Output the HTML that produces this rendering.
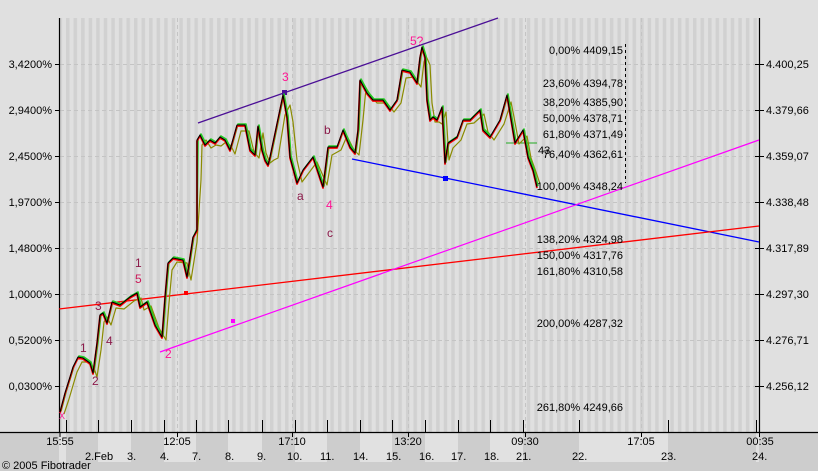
<!DOCTYPE html>
<html><head><meta charset="utf-8"><style>
html,body{margin:0;padding:0;background:#e0e0e0;}
svg{display:block;font-family:"Liberation Sans",Arial,sans-serif;}
</style></head><body>
<svg width="818" height="471" viewBox="0 0 818 471" xmlns="http://www.w3.org/2000/svg">
<defs>
<pattern id="st" x="66" y="0" width="7.554" height="10" patternUnits="userSpaceOnUse">
<rect x="0" y="0" width="3.5" height="10" fill="#d1d1d1"/>
</pattern>
</defs>
<rect width="818" height="471" fill="#e0e0e0"/>
<rect x="60" y="18" width="699" height="414" fill="url(#st)"/>
<!-- bottom axis band -->
<rect x="0" y="432" width="818" height="39" fill="#cdcdcd"/>
<g fill="#e1e1e1">
<rect x="59" y="432" width="7" height="30"/>
<rect x="98" y="432" width="33" height="30"/>
<rect x="164" y="432" width="32" height="30"/>
<rect x="228" y="432" width="34" height="30"/>
<rect x="295" y="432" width="32" height="30"/>
<rect x="360" y="432" width="32" height="30"/>
<rect x="425" y="432" width="33" height="30"/>
<rect x="490" y="432" width="33" height="30"/>
<rect x="579" y="432" width="89" height="30"/>
<rect x="756" y="432" width="3" height="30"/>
</g>
<!-- grid -->
<g stroke="#c4c4c4" stroke-dasharray="4,3" stroke-width="1">
<line x1="60" y1="64.5" x2="759" y2="64.5"/>
<line x1="60" y1="110.5" x2="759" y2="110.5"/>
<line x1="60" y1="156.5" x2="759" y2="156.5"/>
<line x1="60" y1="202.5" x2="759" y2="202.5"/>
<line x1="60" y1="248.5" x2="759" y2="248.5"/>
<line x1="60" y1="294.5" x2="759" y2="294.5"/>
<line x1="60" y1="340.5" x2="759" y2="340.5"/>
<line x1="60" y1="386.5" x2="759" y2="386.5"/>
<line x1="177.5" y1="18" x2="177.5" y2="432"/>
<line x1="292.5" y1="18" x2="292.5" y2="432"/>
<line x1="408.5" y1="18" x2="408.5" y2="432"/>
<line x1="525.5" y1="18" x2="525.5" y2="432"/>
<line x1="641.5" y1="18" x2="641.5" y2="432"/>
</g>
<!-- axes -->
<g stroke="#000" stroke-width="1.2">
<line x1="59.5" y1="18" x2="59.5" y2="433"/>
<line x1="759.5" y1="18" x2="759.5" y2="433"/>
<line x1="0" y1="432.5" x2="818" y2="432.5"/>
</g>
<g stroke="#000" stroke-width="1">
<line x1="66.5" y1="420" x2="66.5" y2="432"/>
<line x1="98.5" y1="420" x2="98.5" y2="432"/>
<line x1="131.5" y1="420" x2="131.5" y2="432"/>
<line x1="164.5" y1="420" x2="164.5" y2="432"/>
<line x1="196.5" y1="420" x2="196.5" y2="432"/>
<line x1="228.5" y1="420" x2="228.5" y2="432"/>
<line x1="262.5" y1="420" x2="262.5" y2="432"/>
<line x1="295.5" y1="420" x2="295.5" y2="432"/>
<line x1="327.5" y1="420" x2="327.5" y2="432"/>
<line x1="360.5" y1="420" x2="360.5" y2="432"/>
<line x1="392.5" y1="420" x2="392.5" y2="432"/>
<line x1="425.5" y1="420" x2="425.5" y2="432"/>
<line x1="458.5" y1="420" x2="458.5" y2="432"/>
<line x1="490.5" y1="420" x2="490.5" y2="432"/>
<line x1="523.5" y1="420" x2="523.5" y2="432"/>
<line x1="579.5" y1="420" x2="579.5" y2="432"/>
<line x1="668.5" y1="420" x2="668.5" y2="432"/>
<line x1="756.5" y1="420" x2="756.5" y2="432"/>
<line x1="60" y1="432" x2="60" y2="437"/>
<line x1="177.5" y1="432" x2="177.5" y2="437"/>
<line x1="292.5" y1="432" x2="292.5" y2="437"/>
<line x1="408.5" y1="432" x2="408.5" y2="437"/>
<line x1="525.5" y1="432" x2="525.5" y2="437"/>
<line x1="641.5" y1="432" x2="641.5" y2="437"/>
<line x1="759.5" y1="432" x2="759.5" y2="437"/>
<line x1="55" y1="64.5" x2="59" y2="64.5"/><line x1="55" y1="110.5" x2="59" y2="110.5"/>
<line x1="55" y1="156.5" x2="59" y2="156.5"/><line x1="55" y1="202.5" x2="59" y2="202.5"/>
<line x1="55" y1="248.5" x2="59" y2="248.5"/><line x1="55" y1="294.5" x2="59" y2="294.5"/>
<line x1="55" y1="340.5" x2="59" y2="340.5"/><line x1="55" y1="386.5" x2="59" y2="386.5"/>
<line x1="755" y1="64.5" x2="764" y2="64.5"/><line x1="755" y1="110.5" x2="764" y2="110.5"/>
<line x1="755" y1="156.5" x2="764" y2="156.5"/><line x1="755" y1="202.5" x2="764" y2="202.5"/>
<line x1="755" y1="248.5" x2="764" y2="248.5"/><line x1="755" y1="294.5" x2="764" y2="294.5"/>
<line x1="755" y1="340.5" x2="764" y2="340.5"/><line x1="755" y1="386.5" x2="764" y2="386.5"/>
</g>
<!-- axis labels -->
<g font-size="11" fill="#000" text-anchor="end">
<text x="52" y="68">3,4200%</text><text x="52" y="114">2,9400%</text>
<text x="52" y="160">2,4500%</text><text x="52" y="206">1,9700%</text>
<text x="52" y="252">1,4800%</text><text x="52" y="298">1,0000%</text>
<text x="52" y="344">0,5200%</text><text x="52" y="390">0,0300%</text>
</g>
<g font-size="11" fill="#000">
<text x="766" y="68">4.400,25</text><text x="766" y="114">4.379,66</text>
<text x="766" y="160">4.359,07</text><text x="766" y="206">4.338,48</text>
<text x="766" y="252">4.317,89</text><text x="766" y="298">4.297,30</text>
<text x="766" y="344">4.276,71</text><text x="766" y="390">4.256,12</text>
</g>
<g font-size="11" fill="#000" text-anchor="middle">
<text x="60" y="445">15:55</text><text x="177" y="445">12:05</text>
<text x="292" y="445">17:10</text><text x="408" y="445">13:20</text>
<text x="525" y="445">09:30</text><text x="641" y="445">17:05</text>
<text x="760" y="445">00:35</text>
</g>
<g font-size="11" fill="#000">
<text x="85" y="460">2.Feb</text><text x="127" y="460">3.</text><text x="160" y="460">4.</text>
<text x="192" y="460">7.</text><text x="225" y="460">8.</text><text x="257" y="460">9.</text>
<text x="287" y="460">10.</text><text x="320" y="460">11.</text><text x="353" y="460">14.</text>
<text x="386" y="460">15.</text><text x="419" y="460">16.</text><text x="451" y="460">17.</text>
<text x="484" y="460">18.</text><text x="516" y="460">21.</text><text x="572" y="460">22.</text>
<text x="661" y="460">23.</text><text x="752" y="460">24.</text>
<text x="2" y="469">© 2005 Fibotrader</text>
</g>
<!-- trend lines -->
<line x1="198" y1="123" x2="498" y2="18" stroke="#4b0f96" stroke-width="1.3"/>
<rect x="282" y="90" width="5" height="5" fill="#4b0f96"/>
<line x1="352" y1="159" x2="759" y2="242" stroke="#0000ff" stroke-width="1.3"/>
<rect x="443" y="176" width="5" height="5" fill="#0000ff"/>
<line x1="59" y1="309" x2="759" y2="226" stroke="#ff0000" stroke-width="1.3"/>
<rect x="184" y="291" width="4" height="4" fill="#ff0000"/>
<line x1="160" y1="352" x2="759" y2="140" stroke="#ff00ff" stroke-width="1.2"/>
<rect x="231" y="319" width="4" height="4" fill="#ff00ff"/>
<line x1="625.5" y1="44" x2="625.5" y2="183" stroke="#000" stroke-dasharray="3,3"/>
<line x1="506" y1="143" x2="537" y2="143" stroke="#22aa22" stroke-width="1"/>
<!-- price -->
<g fill="none" stroke-linejoin="round">
<polyline stroke="#8b8b00" stroke-width="1.2" points="64,414 69,399 74,382 77,372 82,362 87,362 94,368 97,377 101,350 104,322 107,317 111,325 116,308 124,309 134,301 141,298 144,310 151,306 159,328 166,340 169,303 172,270 177,262 187,263 191,280 194,261 197,242 201,180 202,145 206,140 211,148 216,145 221,146 226,142 231,146 235,154 241,131 249,131 254,152 259,158 263,133 266,153 270,163 274,160 278,158 285,115 290,105 293,122 297,160 302,182 308,174 317,162 327,185 332,155 341,150 347,136 354,150 359,155 363,120 366,88 371,96 377,103 387,103 394,112 401,103 406,78 414,77 421,87 424,62 426,56 430,65 432,103 435,122 439,122 442,124 446,112 449,160 453,148 461,140 467,124 474,123 484,114 488,132 494,140 504,124 511,102 514,117 519,144 527,136 531,158 536,172 540,184"/>
<polyline stroke="#22cc22" stroke-width="1.6" points="61,411 66,392 71,376 74,366 79,356 84,357 91,362 94,372 98,342 101,314 104,312 108,322 113,301 121,304 131,296 138,292 141,306 148,301 156,324 163,336 166,296 169,262 174,257 184,259 188,276 191,256 194,236 197,229 198,139 201,134 206,144 211,139 216,142 221,136 226,139 231,149 238,124 246,124 251,149 256,154 259,125 263,149 266,159 269,164 271,156 284,94 288,116 291,156 298,182 304,169 314,156 324,186 329,146 338,146 344,129 351,146 356,152 359,129 361,79 368,92 374,99 384,99 391,109 398,99 403,69 411,71 418,82 421,56 423,46 426,56 428,99 431,119 434,116 438,119 443,106 446,162 449,142 458,136 464,119 471,119 481,109 484,129 491,136 501,119 508,94 511,112 516,142 524,129 529,156 534,169 538,186"/>
<polyline stroke="#ff0000" stroke-width="1.8" points="60,413 65,394 70,378 73,368 78,358 83,359 90,364 93,374 97,344 100,316 103,314 107,324 112,303 120,306 130,298 137,294 140,308 147,303 155,326 162,338 165,298 168,264 173,259 183,261 187,278 190,258 193,238 197,231 197,141 200,136 205,146 210,141 215,144 220,138 225,141 230,151 237,126 245,126 250,151 255,156 258,127 262,151 265,161 268,166 270,158 283,96 287,118 290,158 297,184 303,171 313,158 323,188 328,148 337,148 343,131 350,148 355,154 358,131 360,81 367,94 373,101 383,101 390,111 397,101 402,71 410,73 417,84 420,58 422,48 425,58 427,101 430,121 433,118 437,121 442,108 445,164 448,144 457,138 463,121 470,121 480,111 483,131 490,138 500,121 507,96 510,114 515,144 523,131 528,158 533,171 537,188"/>
<polyline stroke="#000" stroke-width="1.1" points="60,412 65,393 70,377 73,367 78,357 83,358 90,363 93,373 97,343 100,315 103,313 107,323 112,302 120,305 130,297 137,293 140,307 147,302 155,325 162,337 165,297 168,263 173,258 183,260 187,277 190,257 193,237 197,230 197,140 200,135 205,145 210,140 215,143 220,137 225,140 230,150 237,125 245,125 250,150 255,155 258,126 262,150 265,160 268,165 270,157 283,95 287,117 290,157 297,183 303,170 313,157 323,187 328,147 337,147 343,130 350,147 355,153 358,130 360,80 367,93 373,100 383,100 390,110 397,100 402,70 410,72 417,83 420,57 422,47 425,57 427,100 430,120 433,117 437,120 442,107 445,163 448,143 457,137 463,120 470,120 480,110 483,130 490,137 500,120 507,95 510,113 515,143 523,130 528,157 533,170 537,187"/>
</g>
<!-- fib labels -->
<g font-size="11" fill="#000" text-anchor="end">
<text x="623" y="54">0,00% 4409,15</text>
<text x="623" y="87">23,60% 4394,78</text>
<text x="623" y="106">38,20% 4385,90</text>
<text x="623" y="122">50,00% 4378,71</text>
<text x="623" y="138">61,80% 4371,49</text>
<text x="623" y="158">76,40% 4362,61</text>
<text x="623" y="190">100,00% 4348,24</text>
<text x="623" y="243">138,20% 4324,98</text>
<text x="623" y="259">150,00% 4317,76</text>
<text x="623" y="275">161,80% 4310,58</text>
<text x="623" y="327">200,00% 4287,32</text>
<text x="623" y="411">261,80% 4249,66</text>
</g>
<text x="538" y="154" font-size="11" fill="#000">43</text>
<!-- wave labels -->
<g font-size="12">
<text x="282" y="81" fill="#ff1493">3</text>
<text x="410" y="45" fill="#ff1493">5?</text>
<text x="135" y="267" fill="#8b1a4a">1</text>
<text x="135" y="283" fill="#cc1a5a">5</text>
<text x="95" y="310" fill="#8b1a4a">3</text>
<text x="106" y="345" fill="#8b1a4a">4</text>
<text x="80" y="352" fill="#8b1a4a">1</text>
<text x="92" y="385" fill="#8b1a4a">2</text>
<text x="165" y="358" fill="#ff1493">2</text>
<text x="297" y="200" fill="#8b1a4a">a</text>
<text x="324" y="134" fill="#8b1a4a">b</text>
<text x="326" y="209" fill="#ff1493">4</text>
<text x="327" y="237" fill="#8b1a4a">c</text>
<text x="59" y="419" fill="#ff1493" font-size="9">X</text>
</g>
</svg>
</body></html>
